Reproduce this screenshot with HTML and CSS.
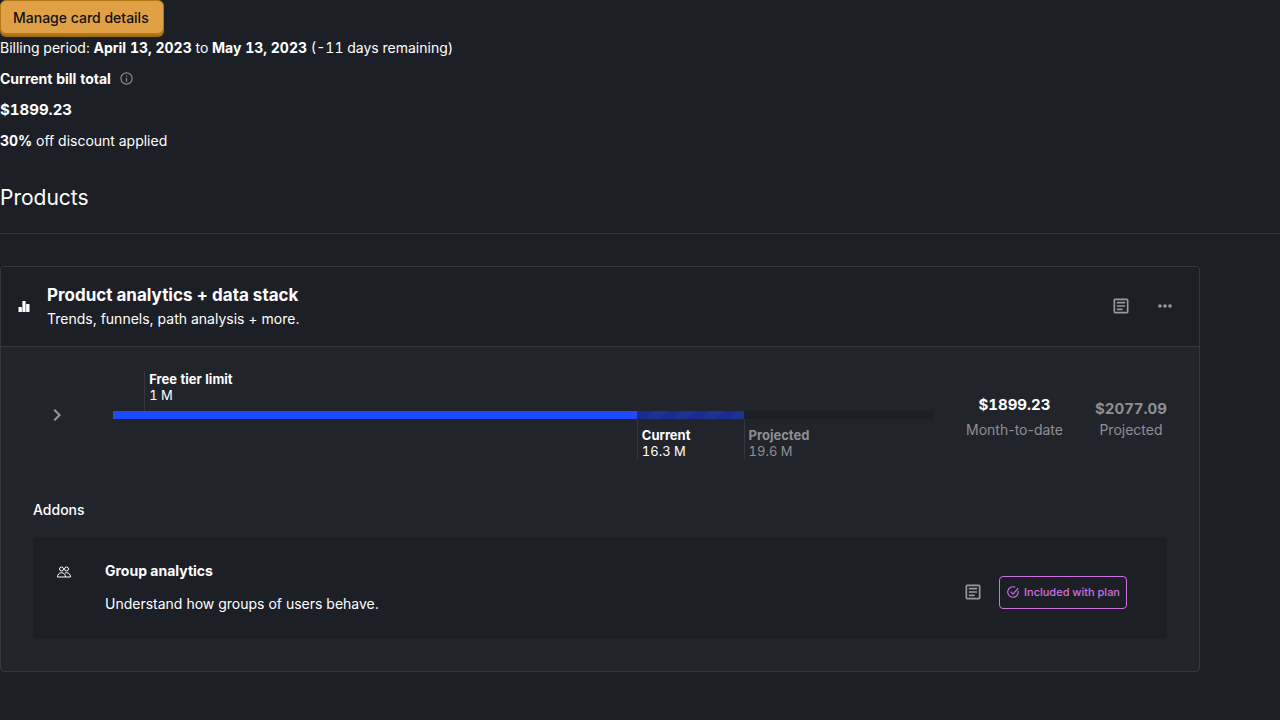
FILE: index.html
```html
<!DOCTYPE html>
<html lang="en">
<head>
<meta charset="utf-8">
<title>Billing</title>
<link rel="stylesheet" href="styles.css">
</head>
<body>
<svg class="defs" aria-hidden="true">
  <symbol id="icon-article" viewBox="0 0 24 24"><path fill="currentColor" d="M19 5v14H5V5h14m0-2H5c-1.100 0-2 .9-2 2v14c0 1.100.9 2 2 2h14c1.100 0 2-.9 2-2V5c0-1.100-.9-2-2-2zm-5 14H7v-2h7v2zm3-4H7v-2h10v2zm0-4H7V7h10v2z"/></symbol>
</svg>
<main class="billing">
  <section class="summary">
    <button class="manage" type="button">Manage card details</button>
    <p class="line">Billing period: <b>April 13, 2023</b> to <b>May 13, 2023</b> (-11 days remaining)</p>
    <p class="line total">Current bill total
      <svg class="info" viewBox="0 0 24 24" aria-hidden="true"><path fill="currentColor" d="M11 7h2v2h-2zm0 4h2v6h-2zm1-9a10 10 0 1 0 0 20 10 10 0 0 0 0-20zm0 18a8 8 0 1 1 0-16 8 8 0 0 1 0 16z"/></svg>
    </p>
    <p class="line price">$1899.23</p>
    <p class="line"><b>30%</b> off discount applied</p>
  </section>
  <h2 class="heading">Products</h2>
  <hr class="divider">
  <article class="card">
    <header class="card-header">
      <svg class="product-icon" viewBox="0 0 14 14" aria-hidden="true"><g fill="currentColor"><rect x="1.500" y="7" width="3.400" height="5" rx=".6"/><rect x="5.400" y="1" width="3.200" height="11" rx=".6"/><rect x="9.100" y="4" width="3.400" height="8" rx=".6"/></g></svg>
      <div class="card-title">
        <h3 class="name">Product analytics + data stack</h3>
        <p class="description">Trends, funnels, path analysis + more.</p>
      </div>
      <div class="actions">
        <button class="icon-button" type="button" aria-label="Documentation"><svg class="icon"><use href="#icon-article"/></svg></button>
        <button class="icon-button" type="button" aria-label="More"><svg class="icon" viewBox="0 0 24 24"><g fill="currentColor"><circle cx="6" cy="12" r="2.200"/><circle cx="12" cy="12" r="2.200"/><circle cx="18" cy="12" r="2.200"/></g></svg></button>
      </div>
    </header>
    <div class="usage">
      <button class="icon-button" type="button" aria-label="Show breakdown"><svg class="chevron" viewBox="0 0 24 24"><path fill="currentColor" d="M10 6 8.590 7.410 13.170 12l-4.580 4.590L10 18l6-6z"/></svg></button>
      <div class="gauge">
        <div class="track">
          <div class="fill projected-fill" style="width:76.8%"></div>
          <div class="fill current-fill" style="width:63.8%"></div>
        </div>
        <div class="marker above" style="left:3.8%"><b>Free tier limit</b><span>1 M</span></div>
        <div class="marker below" style="left:63.8%"><b>Current</b><span>16.3 M</span></div>
        <div class="marker below muted" style="left:76.8%"><b>Projected</b><span>19.6 M</span></div>
      </div>
      <div class="amounts">
        <div class="amount"><span class="price month">$1899.23</span><span>Month-to-date</span></div>
        <div class="amount"><span class="price">$2077.09</span><span>Projected</span></div>
      </div>
    </div>
    <section class="addons">
      <h4 class="addons-title">Addons</h4>
      <div class="addon">
        <svg class="group-icon" viewBox="0 0 16 16" fill="none" stroke="currentColor" aria-hidden="true"><circle cx="5.500" cy="5" r="2"/><circle cx="10.500" cy="5" r="2"/><path d="M1.500 13c0-2.500 1.600-4.300 4-4.300s4 1.800 4 4.300zM9 9c.5-.2 1-.3 1.500-.3 2.400 0 4 1.800 4 4.300h-5"/></svg>
        <div class="addon-text">
          <h5 class="addon-name">Group analytics</h5>
          <p class="description">Understand how groups of users behave.</p>
        </div>
        <div class="addon-actions">
          <button class="icon-button" type="button" aria-label="Documentation"><svg class="icon"><use href="#icon-article"/></svg></button>
          <span class="tag"><svg class="check" viewBox="0 0 24 24" fill="none" stroke="currentColor" stroke-width="2" aria-hidden="true"><path d="M16 4a9 9 0 1 0 4.700 6M8 11.500l4 4 9-10"/></svg>Included with plan</span>
        </div>
      </div>
    </section>
  </article>
</main>
</body>
</html>
```
FILE: styles.css
```css
* { box-sizing: border-box; }
body {
  margin: 0;
  background: #1d1f27;
  color: #fff;
  font-family: Inter, "Liberation Sans", sans-serif;
  font-size: 14px;
  line-height: 21px;
}
h2, h3, h4, h5, p { margin: 0; }
b, .total { font-weight: 700; }
button { font: inherit; cursor: pointer; }
svg { display: block; flex: none; }
.defs { position: absolute; width: 0; height: 0; }

.summary { display: flex; flex-direction: column; align-items: flex-start; gap: 10px; }
.manage {
  height: 34px;
  margin-bottom: -7px;
  padding: 0 14px 0 12px;
  border: 1px solid #b17816;
  border-radius: 6px;
  background: #e0a045;
  box-shadow: 0 1px 0 #b17816, 0 3px 0 #a06c15;
  color: #111;
  font-weight: 500;
}
.line, .marker, .price { font-variant-numeric: tabular-nums; }
.price { font-size: 15px; font-weight: 700; }
.total { display: flex; align-items: center; gap: 8px; }
.info { width: 15px; height: 15px; color: #84868b; }

.heading { margin-top: 32px; font-size: 21px; font-weight: 400; line-height: 30px; }
.divider { margin: 20px 0 32px; border: 0; border-top: 1px solid #35373e; }

.card {
  max-width: 1200px;
  border: 1px solid #35373e;
  border-radius: 4px;
  background: #22242c;
}
.card-header {
  display: flex;
  align-items: center;
  gap: 16px;
  padding: 16px;
  border-bottom: 1px solid #35373e;
  border-radius: 4px 4px 0 0;
  background: #1d1f27;
}
.product-icon { width: 14px; height: 14px; }
.card-title { flex: 1; }
.name { font-size: 17px; font-weight: 700; line-height: 24px; }
.description { line-height: 23px; }
.actions { display: flex; gap: 8px; padding-bottom: 1px; }
.icon-button {
  display: flex;
  align-items: center;
  justify-content: center;
  flex: none;
  width: 36px;
  height: 36px;
  padding: 0;
  border: 0;
  background: none;
  color: #98999d;
}
.icon { width: 20px; height: 20px; }
.chevron { width: 24px; height: 24px; }

.usage { display: flex; align-items: center; padding: 16px 32px; }
.usage > .icon-button { width: 48px; }
.gauge { position: relative; flex: 1; margin: 48px 32px; }
.track { position: relative; height: 8px; background: #1d1f27; }
.fill { position: absolute; top: 0; bottom: 0; left: 0; }
.current-fill { background: #1d4aff; }
.projected-fill { background: repeating-linear-gradient(-45deg, #1d3391 0 10px, #1b2a8f 10px 20px); }
.marker {
  position: absolute;
  display: flex;
  flex-direction: column;
  height: 40px;
  padding-left: 4px;
  border-left: 1px solid #35373e;
  font-size: 13px;
  line-height: 16px;
  white-space: nowrap;
}
.above { bottom: 100%; }
.below { top: 100%; justify-content: flex-end; }
.muted { color: #8e8f93; }
.amounts { display: flex; align-items: flex-end; gap: 32px; padding-top: 4px; }
.amount { display: flex; flex-direction: column; align-items: center; color: #8e8f93; }
.month { margin-bottom: 4px; color: #fff; }

.addons { padding: 16px 32px 32px; }
.addons-title { margin-bottom: 17px; font-size: 14px; font-weight: 500; line-height: 21px; }
.addon {
  display: flex;
  align-items: center;
  padding: 22px 23px 24px;
  border-radius: 4px;
  background: #1d1f27;
}
.group-icon { align-self: flex-start; width: 16px; height: 16px; margin: 5px 33px 0 0; }
.addon-text { flex: 1; }
.addon-name { margin-bottom: 10px; font-size: 14px; font-weight: 700; line-height: 23px; }
.addon-actions { display: flex; align-items: center; gap: 8px; padding-top: 10px; margin-right: 17px; }
.tag {
  display: flex;
  align-items: center;
  gap: 4px;
  padding: 5px 6px;
  border: 1px solid #cc71dd;
  border-radius: 4px;
  color: #cc71dd;
  font-size: 11px;
  font-weight: 500;
}
.check { width: 14px; height: 14px; }
```
